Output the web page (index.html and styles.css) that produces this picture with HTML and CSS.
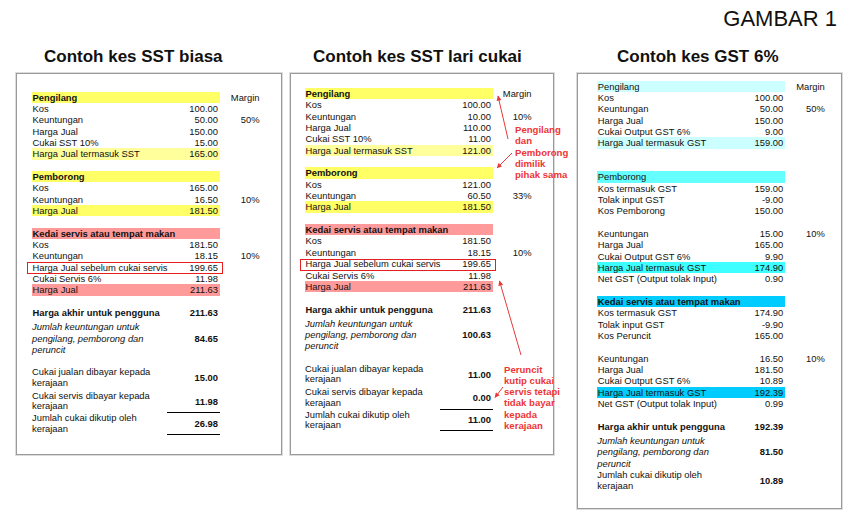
FILE: index.html
```html
<!DOCTYPE html>
<html lang="ms">
<head>
<meta charset="utf-8">
<title>Gambar 1</title>
<link rel="stylesheet" href="styles.css">
</head>
<body>
<header class="fig-label">GAMBAR 1</header>
<main class="cases">
  <section class="case case-1">
    <h2>Contoh kes SST biasa</h2>
    <div class="sheet sheet-1">
      <div class="r"><div class="ab y1 hd"><span>Pengilang</span><span></span></div><span class="m">Margin</span></div>
      <div class="r"><div class="ab"><span>Kos</span><span>100.00</span></div><span class="m"></span></div>
      <div class="r"><div class="ab"><span>Keuntungan</span><span>50.00</span></div><span class="m">50%</span></div>
      <div class="r"><div class="ab"><span>Harga Jual</span><span>150.00</span></div><span class="m"></span></div>
      <div class="r"><div class="ab"><span>Cukai SST 10%</span><span>15.00</span></div><span class="m"></span></div>
      <div class="r"><div class="ab y2"><span>Harga Jual termasuk SST</span><span>165.00</span></div><span class="m"></span></div>
      <div class="r"></div>
      <div class="r"><div class="ab y1 hd"><span>Pemborong</span><span></span></div><span class="m"></span></div>
      <div class="r"><div class="ab"><span>Kos</span><span>165.00</span></div><span class="m"></span></div>
      <div class="r"><div class="ab"><span>Keuntungan</span><span>16.50</span></div><span class="m">10%</span></div>
      <div class="r"><div class="ab y1"><span>Harga Jual</span><span>181.50</span></div><span class="m"></span></div>
      <div class="r"></div>
      <div class="r"><div class="ab pk hd"><span>Kedai servis atau tempat makan</span><span></span></div><span class="m"></span></div>
      <div class="r"><div class="ab"><span>Kos</span><span>181.50</span></div><span class="m"></span></div>
      <div class="r"><div class="ab"><span>Keuntungan</span><span>18.15</span></div><span class="m">10%</span></div>
      <div class="r"><div class="ab boxed"><span>Harga Jual sebelum cukai servis</span><span>199.65</span></div><span class="m"></span></div>
      <div class="r"><div class="ab"><span>Cukai Servis 6%</span><span>11.98</span></div><span class="m"></span></div>
      <div class="r"><div class="ab pk"><span>Harga Jual</span><span>211.63</span></div><span class="m"></span></div>
      <div class="r"></div>
      <div class="r"><div class="ab hd"><span>Harga akhir untuk pengguna</span><span>211.63</span></div><span class="m"></span></div>
      <div class="sum it"><div class="lbl">Jumlah keuntungan untuk<br>pengilang, pemborong dan<br>peruncit</div><div class="val">84.65</div></div>
      <div class="sum first"><div class="lbl">Cukai jualan dibayar kepada<br>kerajaan</div><div class="val">15.00</div></div>
      <div class="sum next"><div class="lbl">Cukai servis dibayar kepada<br>kerajaan</div><div class="val">11.98</div></div>
      <div class="sum total"><div class="lbl">Jumlah cukai dikutip oleh<br>kerajaan</div><div class="val">26.98</div></div>
    </div>
  </section>

  <section class="case case-2">
    <h2>Contoh kes SST lari cukai</h2>
    <div class="sheet sheet-2">
      <div class="r"><div class="ab y1 hd"><span>Pengilang</span><span></span></div><span class="m">Margin</span></div>
      <div class="r"><div class="ab"><span>Kos</span><span>100.00</span></div><span class="m"></span></div>
      <div class="r"><div class="ab"><span>Keuntungan</span><span>10.00</span></div><span class="m">10%</span></div>
      <div class="r"><div class="ab"><span>Harga Jual</span><span>110.00</span></div><span class="m"></span></div>
      <div class="r"><div class="ab"><span>Cukai SST 10%</span><span>11.00</span></div><span class="m"></span></div>
      <div class="r"><div class="ab y2"><span>Harga Jual termasuk SST</span><span>121.00</span></div><span class="m"></span></div>
      <div class="r"></div>
      <div class="r"><div class="ab y1 hd"><span>Pemborong</span><span></span></div><span class="m"></span></div>
      <div class="r"><div class="ab"><span>Kos</span><span>121.00</span></div><span class="m"></span></div>
      <div class="r"><div class="ab"><span>Keuntungan</span><span>60.50</span></div><span class="m">33%</span></div>
      <div class="r"><div class="ab y1"><span>Harga Jual</span><span>181.50</span></div><span class="m"></span></div>
      <div class="r"></div>
      <div class="r"><div class="ab pk hd"><span>Kedai servis atau tempat makan</span><span></span></div><span class="m"></span></div>
      <div class="r"><div class="ab"><span>Kos</span><span>181.50</span></div><span class="m"></span></div>
      <div class="r"><div class="ab"><span>Keuntungan</span><span>18.15</span></div><span class="m">10%</span></div>
      <div class="r"><div class="ab boxed"><span>Harga Jual sebelum cukai servis</span><span>199.65</span></div><span class="m"></span></div>
      <div class="r"><div class="ab"><span>Cukai Servis 6%</span><span>11.98</span></div><span class="m"></span></div>
      <div class="r"><div class="ab pk"><span>Harga Jual</span><span>211.63</span></div><span class="m"></span></div>
      <div class="r"></div>
      <div class="r"><div class="ab hd"><span>Harga akhir untuk pengguna</span><span>211.63</span></div><span class="m"></span></div>
      <div class="sum it"><div class="lbl">Jumlah keuntungan untuk<br>pengilang, pemborong dan<br>peruncit</div><div class="val">100.63</div></div>
      <div class="sum first"><div class="lbl">Cukai jualan dibayar kepada<br>kerajaan</div><div class="val">11.00</div></div>
      <div class="sum next"><div class="lbl">Cukai servis dibayar kepada<br>kerajaan</div><div class="val">0.00</div></div>
      <div class="sum total"><div class="lbl">Jumlah cukai dikutip oleh<br>kerajaan</div><div class="val">11.00</div></div>

      <svg class="arrows" width="300" height="400" viewBox="0 0 300 400" aria-hidden="true">
        <defs>
          <marker id="ah" viewBox="0 0 6 6" markerWidth="6" markerHeight="5" refX="5.5" refY="3" orient="auto" markerUnits="userSpaceOnUse">
            <path d="M0,0 L6,3 L0,6 z" fill="#e83a3a"/>
          </marker>
        </defs>
        <line x1="217" y1="65" x2="207" y2="22" marker-end="url(#ah)"/>
        <line x1="221" y1="79" x2="206" y2="94" marker-end="url(#ah)"/>
        <line x1="230" y1="281" x2="208.5" y2="207" marker-end="url(#ah)"/>
        <line x1="212" y1="313" x2="204" y2="323.5" marker-end="url(#ah)"/>
      </svg>
      <p class="note note-1">Pengilang<br>dan<br>Pemborong<br>dimilik<br>pihak sama</p>
      <p class="note note-2">Peruncit<br>kutip cukai<br>servis tetapi<br>tidak bayar<br>kepada<br>kerajaan</p>
    </div>
  </section>

  <section class="case case-3">
    <h2>Contoh kes GST 6%</h2>
    <div class="sheet sheet-3">
      <div class="r"><div class="ab c1"><span>Pengilang</span><span></span></div><span class="m">Margin</span></div>
      <div class="r"><div class="ab"><span>Kos</span><span>100.00</span></div><span class="m"></span></div>
      <div class="r"><div class="ab"><span>Keuntungan</span><span>50.00</span></div><span class="m">50%</span></div>
      <div class="r"><div class="ab"><span>Harga Jual</span><span>150.00</span></div><span class="m"></span></div>
      <div class="r"><div class="ab"><span>Cukai Output GST 6%</span><span>9.00</span></div><span class="m"></span></div>
      <div class="r"><div class="ab c1"><span>Harga Jual termasuk GST</span><span>159.00</span></div><span class="m"></span></div>
      <div class="r"></div>
      <div class="r"></div>
      <div class="r"><div class="ab c2"><span>Pemborong</span><span></span></div><span class="m"></span></div>
      <div class="r"><div class="ab"><span>Kos termasuk GST</span><span>159.00</span></div><span class="m"></span></div>
      <div class="r"><div class="ab"><span>Tolak input GST</span><span>-9.00</span></div><span class="m"></span></div>
      <div class="r"><div class="ab"><span>Kos Pemborong</span><span>150.00</span></div><span class="m"></span></div>
      <div class="r"></div>
      <div class="r"><div class="ab"><span>Keuntungan</span><span>15.00</span></div><span class="m">10%</span></div>
      <div class="r"><div class="ab"><span>Harga Jual</span><span>165.00</span></div><span class="m"></span></div>
      <div class="r"><div class="ab"><span>Cukai Output GST 6%</span><span>9.90</span></div><span class="m"></span></div>
      <div class="r"><div class="ab c3"><span>Harga Jual termasuk GST</span><span>174.90</span></div><span class="m"></span></div>
      <div class="r"><div class="ab"><span>Net GST (Output tolak Input)</span><span>0.90</span></div><span class="m"></span></div>
      <div class="r"></div>
      <div class="r"><div class="ab c4 hd"><span>Kedai servis atau tempat makan</span><span></span></div><span class="m"></span></div>
      <div class="r"><div class="ab"><span>Kos termasuk GST</span><span>174.90</span></div><span class="m"></span></div>
      <div class="r"><div class="ab"><span>Tolak input GST</span><span>-9.90</span></div><span class="m"></span></div>
      <div class="r"><div class="ab"><span>Kos Peruncit</span><span>165.00</span></div><span class="m"></span></div>
      <div class="r"></div>
      <div class="r"><div class="ab"><span>Keuntungan</span><span>16.50</span></div><span class="m">10%</span></div>
      <div class="r"><div class="ab"><span>Harga Jual</span><span>181.50</span></div><span class="m"></span></div>
      <div class="r"><div class="ab"><span>Cukai Output GST 6%</span><span>10.89</span></div><span class="m"></span></div>
      <div class="r"><div class="ab c4"><span>Harga Jual termasuk GST</span><span>192.39</span></div><span class="m"></span></div>
      <div class="r"><div class="ab"><span>Net GST (Output tolak Input)</span><span>0.99</span></div><span class="m"></span></div>
      <div class="r"></div>
      <div class="r"><div class="ab hd"><span>Harga akhir untuk pengguna</span><span>192.39</span></div><span class="m"></span></div>
      <div class="sum it"><div class="lbl">Jumlah keuntungan untuk<br>pengilang, pemborong dan<br>peruncit</div><div class="val">81.50</div></div>
      <div class="sum plain"><div class="lbl">Jumlah cukai dikutip oleh<br>kerajaan</div><div class="val">10.89</div></div>
    </div>
  </section>
</main>
</body>
</html>
```

FILE: styles.css
```css
* { box-sizing: border-box; }

html, body {
  margin: 0;
  background: #fff;
}

body {
  width: 853px;
  height: 515px;
  overflow: hidden;
  font-family: "Liberation Sans", Arial, sans-serif;
  color: #000;
}

.fig-label {
  margin: 0;
  padding: 8px 16px 0 0;
  font-size: 22px;
  line-height: 22px;
  text-align: right;
  color: #111;
}

.cases {
  display: flex;
  align-items: flex-start;
  padding-left: 16px;
  margin-top: 17px;
}

.case {
  display: flex;
  flex-direction: column;
}

.case-1 { width: 266px; }
.case-2 { width: 264px; margin-left: 8px; }
.case-3 { width: 265px; margin-left: 23px; }

.case h2 {
  margin: 0 0 6px;
  font-size: 17px;
  line-height: 20px;
  font-weight: bold;
  white-space: nowrap;
  color: #111;
}

.case-1 h2 { padding-left: 28px; }
.case-2 h2 { padding-left: 23px; }
.case-3 h2 { padding-left: 40px; }

.sheet {
  position: relative;
  border: 1px solid #9a9a9a;
  box-shadow: 0 0 0 1px #dcdcdc;
  font-size: 9.4px;
  line-height: 11.35px;
  color: #111;
}

.sheet-1 { height: 382px; padding: 17.5px 0 0 15px; }
.sheet-2 { height: 382px; padding: 14px 0 0 14px; }
.sheet-3 { height: 436px; padding: 6.5px 0 0 19.3px; }

.r {
  display: flex;
  height: 11.35px;
}

.ab {
  width: 187.5px;
  display: flex;
  justify-content: space-between;
  padding: 0 1.5px 0 0.5px;
  white-space: nowrap;
}

.m {
  width: 40px;
  text-align: right;
  white-space: nowrap;
}

.sheet-2 .m { width: 39px; }

.hd { font-weight: bold; }

.y1 { background: #ffff66; }
.y2 { background: #ffff9c; }
.pk { background: #ff9a9a; }
.c1 { background: #ccffff; }
.c2 { background: #66ffff; }
.c3 { background: #3dffff; }
.c4 { background: #00ccff; }

.boxed { position: relative; }
.boxed::after {
  content: "";
  position: absolute;
  left: -5.5px;
  right: -3px;
  top: 0.5px;
  bottom: -1px;
  border: 1px solid #e61e1e;
}

.sum {
  display: grid;
  grid-template-columns: 135px 52.5px;
}

.sum .lbl {
  line-height: 10.7px;
  white-space: nowrap;
}

.sum .val {
  display: flex;
  align-items: center;
  justify-content: flex-end;
  font-weight: bold;
  padding-right: 1.5px;
}

.sum.it { margin-top: 3px; }
.sum.it .lbl {
  font-style: italic;
  line-height: 11.2px;
}

.sum.first { margin-top: 12.3px; }
.sum.next { margin-top: 2px; }
.sum.plain { margin-top: 1.3px; }

.sum.total .lbl { padding-top: 1px; }
.sum.total .val {
  border-top: 1px solid #000;
  border-bottom: 1px solid #000;
}

.arrows {
  position: absolute;
  left: 0;
  top: 0;
  overflow: visible;
  pointer-events: none;
}

.arrows line {
  stroke: #e83a3a;
  stroke-width: 1;
}

.note {
  position: absolute;
  margin: 0;
  color: #ee3535;
  font-weight: bold;
  font-size: 9.6px;
  line-height: 11.3px;
  white-space: nowrap;
}

.note-1 { left: 224px; top: 50px; }
.note-2 { left: 213px; top: 289.5px; }
```
